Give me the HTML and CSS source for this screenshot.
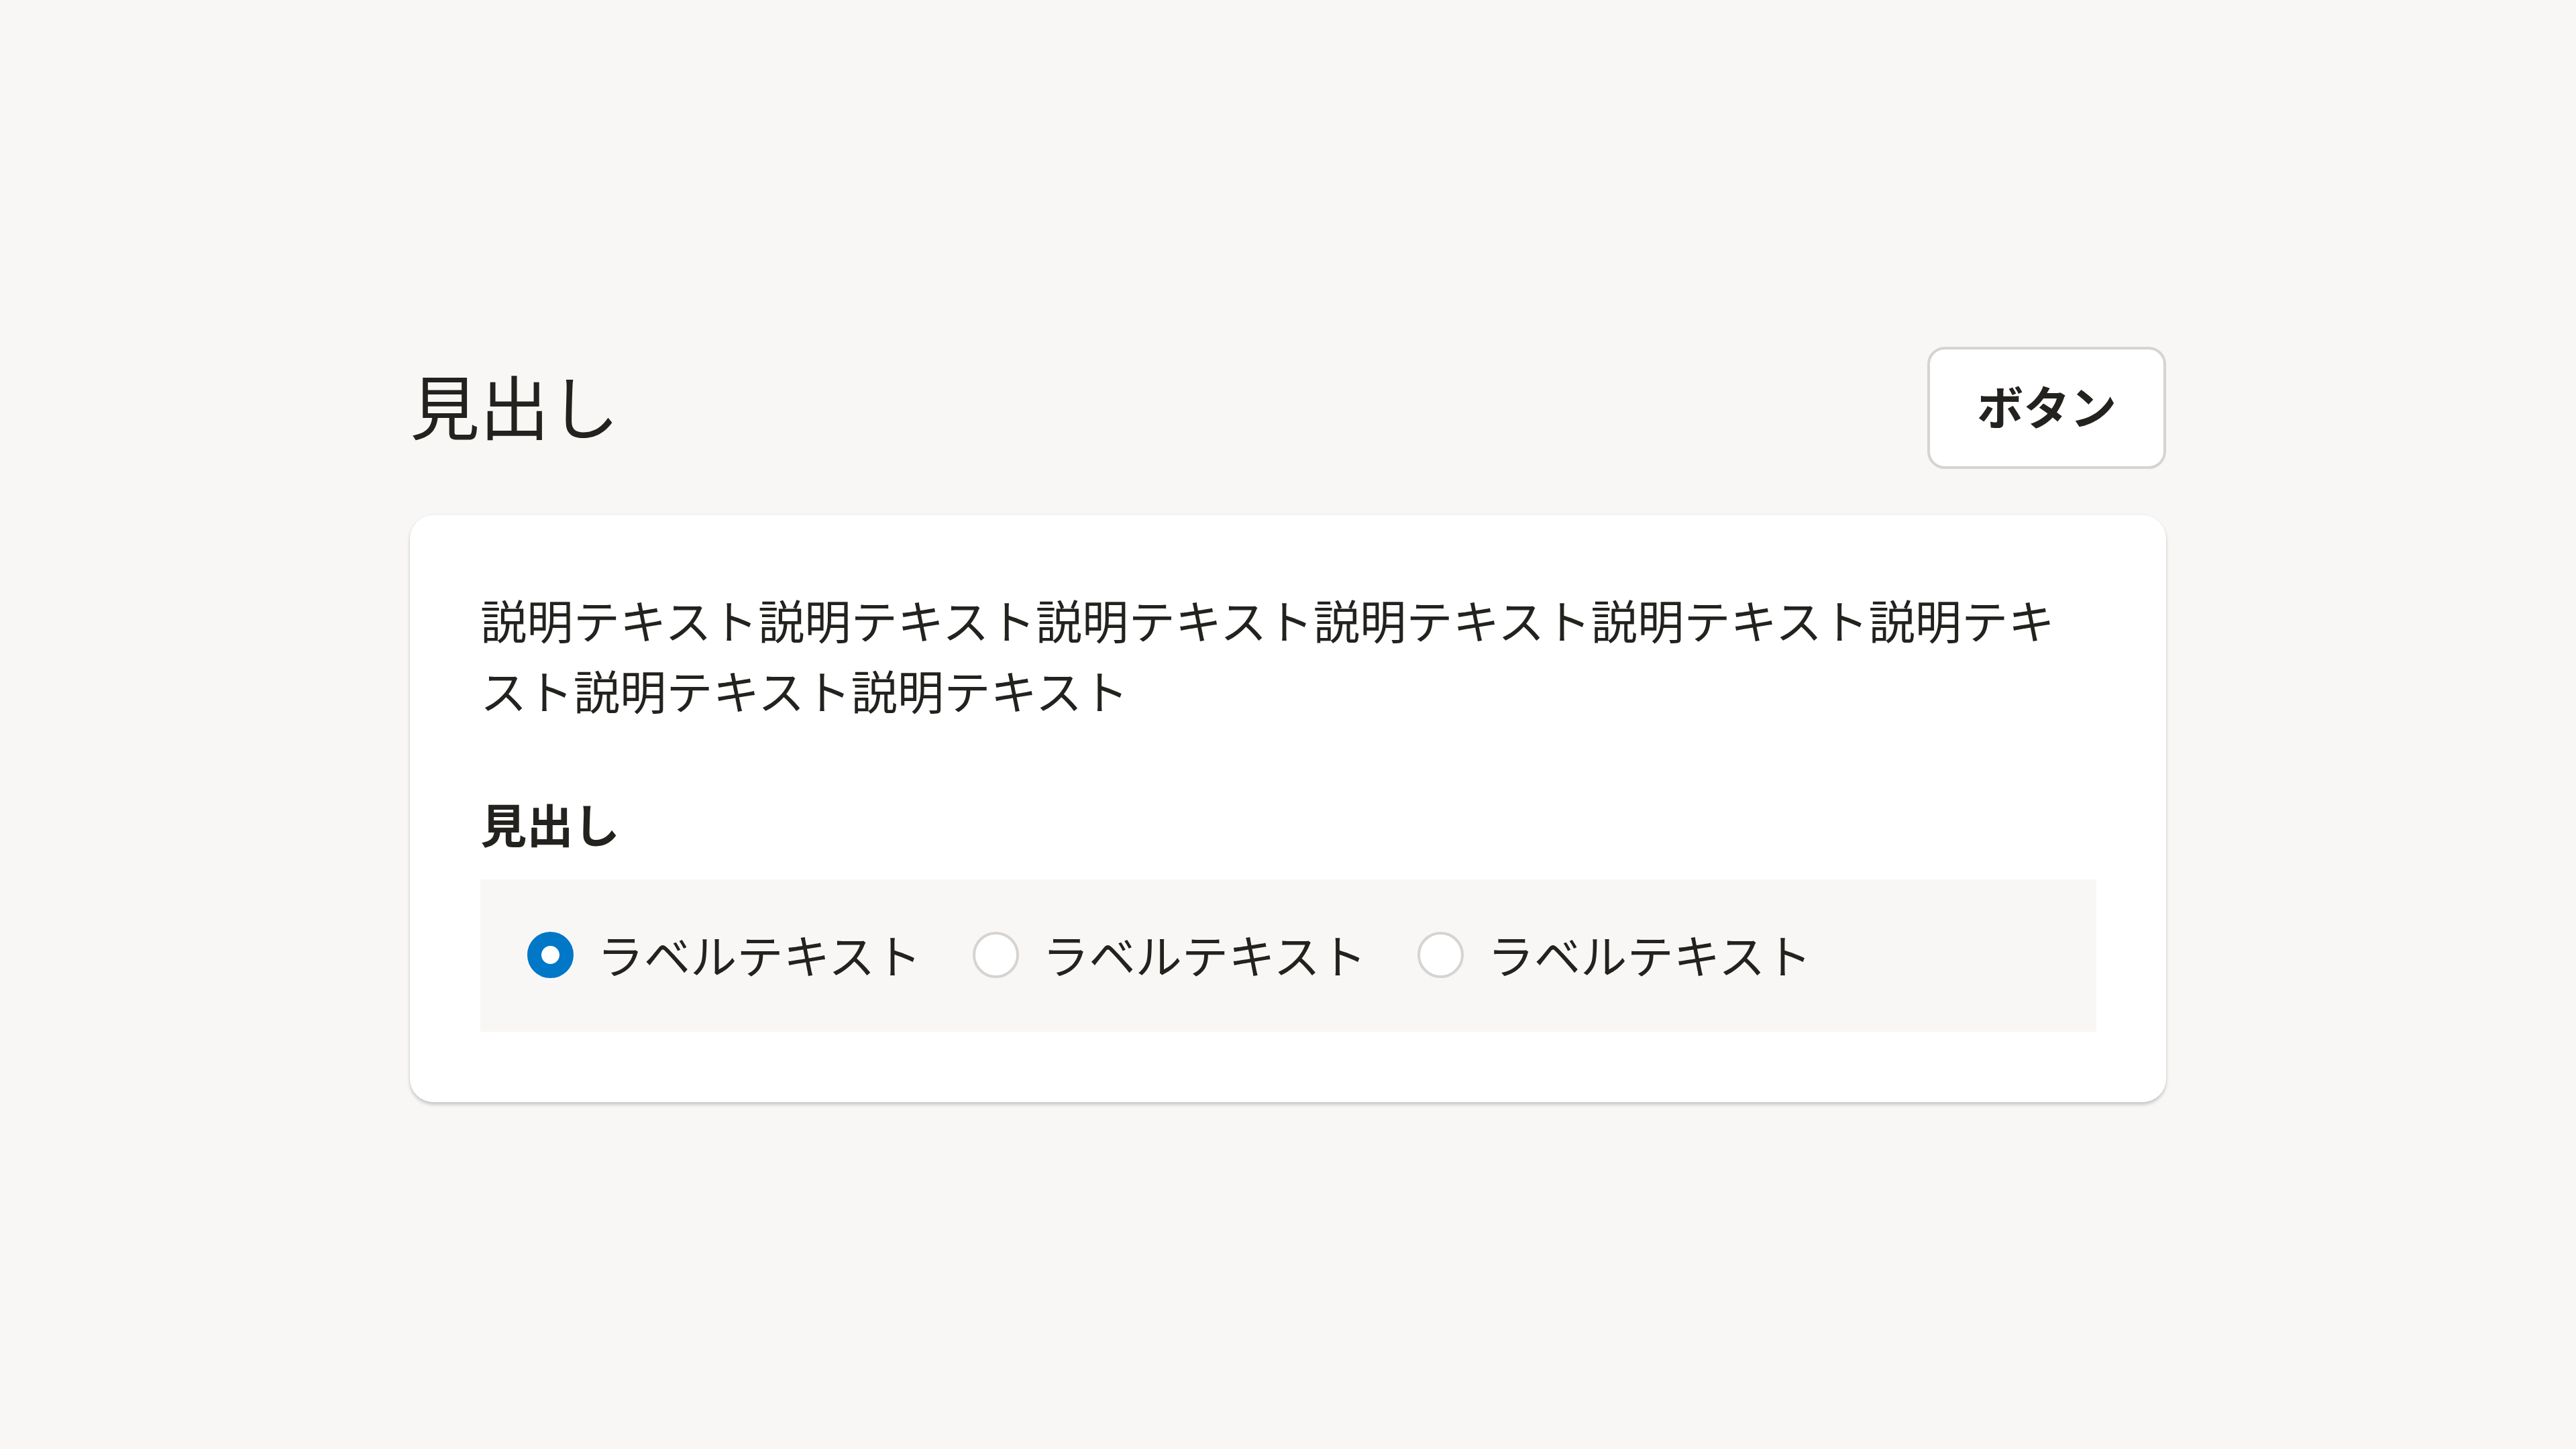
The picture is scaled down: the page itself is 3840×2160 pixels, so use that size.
FILE: index.html
```html
<!DOCTYPE html>
<html lang="ja">
<head>
<meta charset="utf-8">
<title>見出し</title>
<link rel="stylesheet" href="styles.css">
</head>
<body>
<main class="page">
  <div class="container">
    <header class="header">
      <h1 class="title">見出し</h1>
      <button class="button" type="button">ボタン</button>
    </header>
    <section class="card">
      <p class="desc">説明テキスト説明テキスト説明テキスト説明テキスト説明テキスト説明テキスト説明テキスト説明テキスト</p>
      <fieldset class="fieldset">
        <legend class="legend">見出し</legend>
        <div class="radio-group">
          <label class="radio-item">
            <span class="radio checked"></span>
            <span class="radio-label">ラベルテキスト</span>
          </label>
          <label class="radio-item">
            <span class="radio"></span>
            <span class="radio-label">ラベルテキスト</span>
          </label>
          <label class="radio-item">
            <span class="radio"></span>
            <span class="radio-label">ラベルテキスト</span>
          </label>
        </div>
      </fieldset>
    </section>
  </div>
</main>
</body>
</html>
```

FILE: styles.css
```css
:root {
  --text: #23221e;
  --bg: #f8f7f6;
  --border: #d6d3d0;
  --main: #0077c7;
}

* { box-sizing: border-box; }

html, body {
  margin: 0;
  padding: 0;
}

body {
  background: var(--bg);
  color: var(--text);
  font-family: "Noto Sans CJK JP", "Noto Sans", sans-serif;
}

.page {
  min-height: 100vh;
  display: flex;
  align-items: center;
  justify-content: center;
}

.container {
  width: 2618px;
}

.header {
  display: flex;
  align-items: center;
  justify-content: space-between;
  margin-bottom: 69px;
}

.title {
  margin: 0;
  padding-bottom: 10px;
  font-size: 104px;
  font-weight: 400;
  line-height: 1.5;
}

.button {
  font-family: inherit;
  font-size: 69.33px;
  font-weight: 700;
  line-height: 1;
  color: var(--text);
  background: #fff;
  border: 4.33px solid var(--border);
  border-radius: 26px;
  padding: 49px 70px 55px;
  margin: 0;
}

.card {
  background: #fff;
  border-radius: 35px;
  padding: 103px 104px 105px 105px;
  box-shadow: 0 4px 5px rgba(0, 0, 0, 0.18), 0 0 4px rgba(0, 0, 0, 0.05);
}

.desc {
  margin: 0;
  font-size: 69.33px;
  line-height: 105px;
}

.fieldset {
  border: 0;
  margin: 0;
  padding: 0;
  min-width: 0;
}

.legend {
  padding: 0;
  margin: 94px 0 32px;
  float: left;
  width: 100%;
  font-size: 69.33px;
  font-weight: 700;
  line-height: 104px;
}

.radio-group {
  clear: both;
  display: flex;
  align-items: center;
  gap: 76px;
  background: var(--bg);
  padding: 59px 69px 60px 70px;
}

.radio-item {
  display: flex;
  align-items: center;
  gap: 35px;
}

.radio {
  flex: none;
  width: 69.33px;
  height: 69.33px;
  border-radius: 50%;
  background: #fff;
  border: 4.33px solid var(--border);
}

.radio.checked {
  border: 21.67px solid var(--main);
}

.radio-label {
  font-size: 69.33px;
  line-height: 104px;
  padding-bottom: 4px;
}
```
